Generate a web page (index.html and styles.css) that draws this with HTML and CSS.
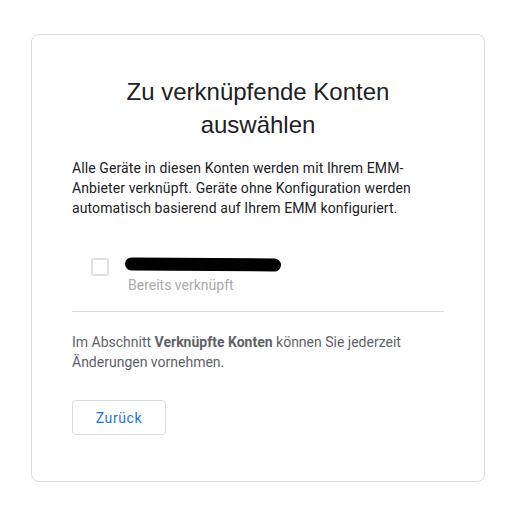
FILE: index.html
```html
<!DOCTYPE html>
<html lang="de">
<head>
  <meta charset="UTF-8">
  <title>Zu verknüpfende Konten auswählen</title>
  <link rel="stylesheet" href="styles.css">
</head>
<body>

  <div class="card">
    <h1 class="title">Zu verknüpfende Konten auswählen</h1>

    <p class="intro">
      Alle Geräte in diesen Konten werden mit Ihrem EMM-Anbieter verknüpft. Geräte ohne Konfiguration werden automatisch basierend auf Ihrem EMM konfiguriert.
    </p>

    <div class="account">
      <span class="checkbox"></span>
      <div class="account-info">
        <span class="redacted"></span>
        <div class="account-status">Bereits verknüpft</div>
      </div>
    </div>

    <div class="divider"></div>

    <p class="note">
      Im Abschnitt <b>Verknüpfte Konten</b> können Sie jederzeit Änderungen vornehmen.
    </p>

    <button class="back-btn">Zurück</button>
  </div>

</body>
</html>
```

FILE: styles.css
```css
body {
  margin: 0;
  padding: 34px 28px 28px 31px;
  background: #ffffff;
  font-family: Roboto, 'Noto Sans', sans-serif;
  color: #202124;
}

.card {
  width: 372px;
  border: 1px solid #dadce0;
  border-radius: 8px;
  padding: 40px 40px 46px 40px;
}

.title {
  margin: 0 0 17px 0;
  font-family: 'Liberation Sans', Arial, sans-serif;
  font-size: 24px;
  font-weight: 400;
  line-height: 33px;
  text-align: center;
  color: #202124;
  padding: 0 20px;
}

.intro {
  margin: 0;
  font-size: 14px;
  line-height: 20px;
  color: #202124;
  letter-spacing: 0.1px;
}

.account {
  display: flex;
  align-items: flex-start;
  margin-top: 37px;
  padding-left: 19px;
}

.checkbox {
  width: 14px;
  height: 14px;
  border: 2px solid #e0e0e0;
  border-radius: 2px;
  margin-top: 3px;
  margin-right: 19px;
  flex-shrink: 0;
}

.account-info {
  display: flex;
  flex-direction: column;
}

.redacted {
  display: block;
  width: 156px;
  height: 13px;
  background: #000;
  border-radius: 7px;
  margin: 3px 0 4px -3px;
  transform: rotate(0.4deg);
}

.account-status {
  font-size: 14px;
  line-height: 20px;
  color: #a8abaf;
}

.divider {
  height: 1px;
  background: #dadce0;
  margin-top: 16px;
}

.note {
  margin: 20px 0 0 0;
  font-size: 14px;
  line-height: 20px;
  color: #5f6368;
}

.note b {
  font-weight: 700;
  color: #5f6368;
}

.back-btn {
  display: block;
  margin-top: 28px;
  width: 94px;
  height: 35px;
  background: #fff;
  border: 1px solid #dadce0;
  border-radius: 4px;
  font-family: Roboto, sans-serif;
  font-size: 14px;
  font-weight: 400;
  letter-spacing: 0.6px;
  color: #1a73e8;
  cursor: pointer;
}
```
